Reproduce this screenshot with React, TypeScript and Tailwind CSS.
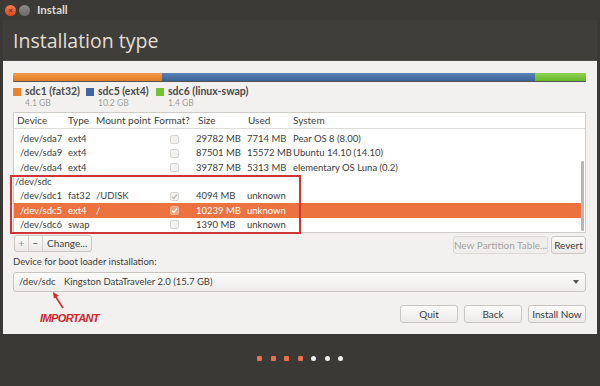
import React from "react";

const font = { fontFamily: 'Lato, "Open Sans", "DejaVu Sans", sans-serif' };

type Row = {
  device: string;
  type?: string;
  mount?: string;
  format?: "off" | "on" | "dim";
  size?: string;
  used?: string;
  system?: string;
  group?: boolean;
  selected?: boolean;
};

const rows: Row[] = [
  { device: "/dev/sda7", type: "ext4", format: "off", size: "29782 MB", used: "7714 MB", system: "Pear OS 8 (8.00)" },
  { device: "/dev/sda9", type: "ext4", format: "off", size: "87501 MB", used: "15572 MB", system: "Ubuntu 14.10 (14.10)" },
  { device: "/dev/sda4", type: "ext4", format: "off", size: "39787 MB", used: "5313 MB", system: "elementary OS Luna (0.2)" },
  { device: "/dev/sdc", group: true },
  { device: "/dev/sdc1", type: "fat32", mount: "/UDISK", format: "dim", size: "4094 MB", used: "unknown" },
  { device: "/dev/sdc5", type: "ext4", mount: "/", format: "on", size: "10239 MB", used: "unknown", selected: true },
  { device: "/dev/sdc6", type: "swap", format: "off", size: "1390 MB", used: "unknown" },
];

const Check = ({ state, selected }: { state?: Row["format"]; selected?: boolean }) => {
  if (!state) return null;
  return (
    <div
      className={
        "w-[9px] h-[9px] rounded-[2px] border flex items-center justify-center " +
        (selected ? "border-[#f6b596] bg-[#f4a47c]" : "border-[#d6d4d0] bg-[#f3f2f0]")
      }
    >
      {state !== "off" && (
        <svg width="7" height="7" viewBox="0 0 7 7">
          <path
            d="M1 3.6 L2.8 5.3 L6 1.5"
            fill="none"
            stroke={selected ? "#ffffff" : "#b9b7b3"}
            strokeWidth="1.2"
          />
        </svg>
      )}
    </div>
  );
};

const cols = "grid grid-cols-[51px_28px_58px_44px_50px_45px_1fr] whitespace-nowrap";

const Btn = ({ children, className = "" }: { children: React.ReactNode; className?: string }) => (
  <div
    className={
      "h-[18px] flex items-center justify-center whitespace-nowrap rounded-[3px] border border-[#c9c6c1] bg-gradient-to-b from-[#fbfbfa] to-[#ebeae8] text-[10px] text-[#3c3c3c] " +
      className
    }
  >
    {children}
  </div>
);

export default function App() {
  return (
    <div className="w-[600px] h-[386px] bg-[#3a3935] flex flex-col overflow-hidden" style={font}>
      {/* title bar */}
      <div className="h-[20px] flex items-center pl-[5px] gap-[2px] bg-[#3b3a36]">
        <div className="w-[11px] h-[11px] rounded-full bg-gradient-to-b from-[#f27a4a] to-[#d9481f] flex items-center justify-center text-[8px] leading-none text-[#7a2a10] font-bold">
          ×
        </div>
        <div className="w-[11px] h-[11px] rounded-full bg-gradient-to-b from-[#8e8c86] to-[#6c6a65] ml-[1px]" />
        <span className="ml-[5px] text-[11.5px] font-bold text-[#dfdbd2]">Install</span>
      </div>

      {/* header */}
      <div className="h-[41px] mx-[3px] bg-[#3f3e3a] border-b border-[#4a4944] flex items-center pl-[10px]">
        <span
          className="text-[19.5px] text-[#e2ded6] leading-none mt-[1px]"
          style={{ fontFamily: '"Open Sans", sans-serif' }}
        >
          Installation type
        </span>
      </div>

      {/* content */}
      <div className="flex-1 mx-[3px] bg-[#f2f1f0] pl-[10px] pr-[11px] pt-[12px] flex flex-col relative">
        {/* partition bar */}
        <div className="h-[9px] flex rounded-[1px] overflow-hidden border-b border-[#555]">
          <div className="w-[149px] bg-gradient-to-b from-[#f29a4a] to-[#de7c28]" />
          <div className="flex-1 bg-gradient-to-b from-[#5b83b8] to-[#3c6398]" />
          <div className="w-[51px] bg-gradient-to-b from-[#8fd24f] to-[#66b82c]" />
        </div>

        {/* legend */}
        <div className="flex mt-[3px] h-[23px] whitespace-nowrap">
          {[
            ["sdc1 (fat32)", "4.1 GB", "bg-[#e8822e]", "w-[73px]"],
            ["sdc5 (ext4)", "10.2 GB", "bg-[#3f66a0]", "w-[70px]"],
            ["sdc6 (linux-swap)", "1.4 GB", "bg-[#72c234]", "w-[100px]"],
          ].map(([name, size, color, w]) => (
            <div key={name} className={"flex " + w}>
              <div className={"w-[8px] h-[8px] mt-[3px] " + color} />
              <div className="ml-[4px] flex flex-col">
                <span className="text-[10.5px] leading-[13px] font-bold text-[#4a4a4a]">{name}</span>
                <span className="text-[8.5px] leading-[10px] text-[#a09f9c]">{size}</span>
              </div>
            </div>
          ))}
        </div>

        {/* table */}
        <div className="mt-[4px] h-[121px] bg-white border border-[#cfccc7] relative text-[9.5px] text-[#3c3c3c]">
          <div className={cols + " h-[16px] items-center border-b border-[#dedcd8] pl-[3px] text-[10px]"}>
            <span>Device</span>
            <span>Type</span>
            <span>Mount point</span>
            <span>Format?</span>
            <span>Size</span>
            <span>Used</span>
            <span>System</span>
          </div>
          <div className="pt-[3px]">
            {rows.map((r) => (
              <div
                key={r.device}
                className={
                  cols +
                  " h-[14.3px] items-center pl-[3px] mr-[4px] " +
                  (r.selected ? "bg-[#ec7340] text-white" : "")
                }
              >
                <span className={r.group ? "-ml-[2px]" : "pl-[3px]"}>{r.device}</span>
                <span>{r.type}</span>
                <span>{r.mount}</span>
                <span className="flex pl-[16px]">
                  <Check state={r.format} selected={r.selected} />
                </span>
                <span className="-ml-[2px]">{r.size}</span>
                <span className="-ml-[1px]">{r.used}</span>
                <span>{r.system}</span>
              </div>
            ))}
          </div>
          {/* scrollbar */}
          <div className="absolute right-[1px] top-[48px] bottom-[1px] w-[3px] bg-[#b9b7b3] rounded-[1px]" />
          {/* annotation box */}
          <div className="absolute left-[-4px] top-[62px] w-[291px] h-[59px] border-2 border-[#cf3535] pointer-events-none" />
        </div>

        {/* table buttons */}
        <div className="flex justify-between mt-[2px] h-[18px]">
          <div className="flex h-[17px] ml-[1px] rounded-[3px] border border-[#c9c6c1] bg-gradient-to-b from-[#fbfbfa] to-[#ebeae8] text-[10px] text-[#3c3c3c] whitespace-nowrap">
            <span className="w-[14px] flex items-center justify-center text-[#8a8a8a] border-r border-[#d3d0cc]">+</span>
            <span className="w-[14px] flex items-center justify-center border-r border-[#d3d0cc]">−</span>
            <span className="px-[4px] flex items-center">Change...</span>
          </div>
          <div className="flex gap-[3px] mt-[1px]">
            <Btn className="w-[95px] text-[#a5a39f] border-[#dcdad6] bg-none bg-[#efeeec]">New Partition Table...</Btn>
            <Btn className="w-[35px]">Revert</Btn>
          </div>
        </div>

        <div className="mt-[2px] text-[9.5px] text-[#3c3c3c] leading-[14px] whitespace-nowrap">Device for boot loader installation:</div>

        {/* combobox */}
        <div className="mt-[3px] h-[20px] rounded-[3px] border border-[#c9c6c1] bg-gradient-to-b from-[#fbfbfa] to-[#efeeec] flex items-center text-[9.5px] text-[#3c3c3c] pl-[5px] pr-[6px] whitespace-nowrap">
          <span className="w-[45px]">/dev/sdc</span>
          <span>Kingston DataTraveler 2.0 (15.7 GB)</span>
          <svg className="ml-auto" width="6" height="4" viewBox="0 0 6 4">
            <path d="M0 0 L6 0 L3 4 Z" fill="#555" />
          </svg>
        </div>

        {/* bottom buttons */}
        <div className="flex justify-end gap-[6px] mt-[13px]">
          <Btn className="w-[58px]">Quit</Btn>
          <Btn className="w-[58px]">Back</Btn>
          <Btn className="w-[58px]">Install Now</Btn>
        </div>

        {/* IMPORTANT annotation */}
        <svg className="absolute left-[47px] top-[229px]" width="16" height="20" viewBox="0 0 16 20">
          <path d="M13 18 L5.5 6.5" stroke="#d22a2a" strokeWidth="1.6" />
          <path d="M3 2 L8.8 5.4 L3.8 8.6 Z" fill="#d22a2a" />
        </svg>
        <span
          className="absolute left-[37px] top-[249px] text-[11px] font-bold italic text-[#d2262a] tracking-[-0.6px]"
          style={{ fontFamily: '"Liberation Sans", Arial, sans-serif' }}
        >
          IMPORTANT
        </span>
      </div>

      {/* footer dots */}
      <div className="h-[52px] flex items-center justify-center gap-[8.5px] pb-[3px]">
        {[0, 1, 2, 3].map((i) => (
          <div key={i} className="w-[5px] h-[5px] rounded-[1px] bg-[#e8704a]" />
        ))}
        {[0, 1, 2].map((i) => (
          <div key={"w" + i} className="w-[5px] h-[5px] rounded-full bg-[#f0efed]" />
        ))}
      </div>
    </div>
  );
}
